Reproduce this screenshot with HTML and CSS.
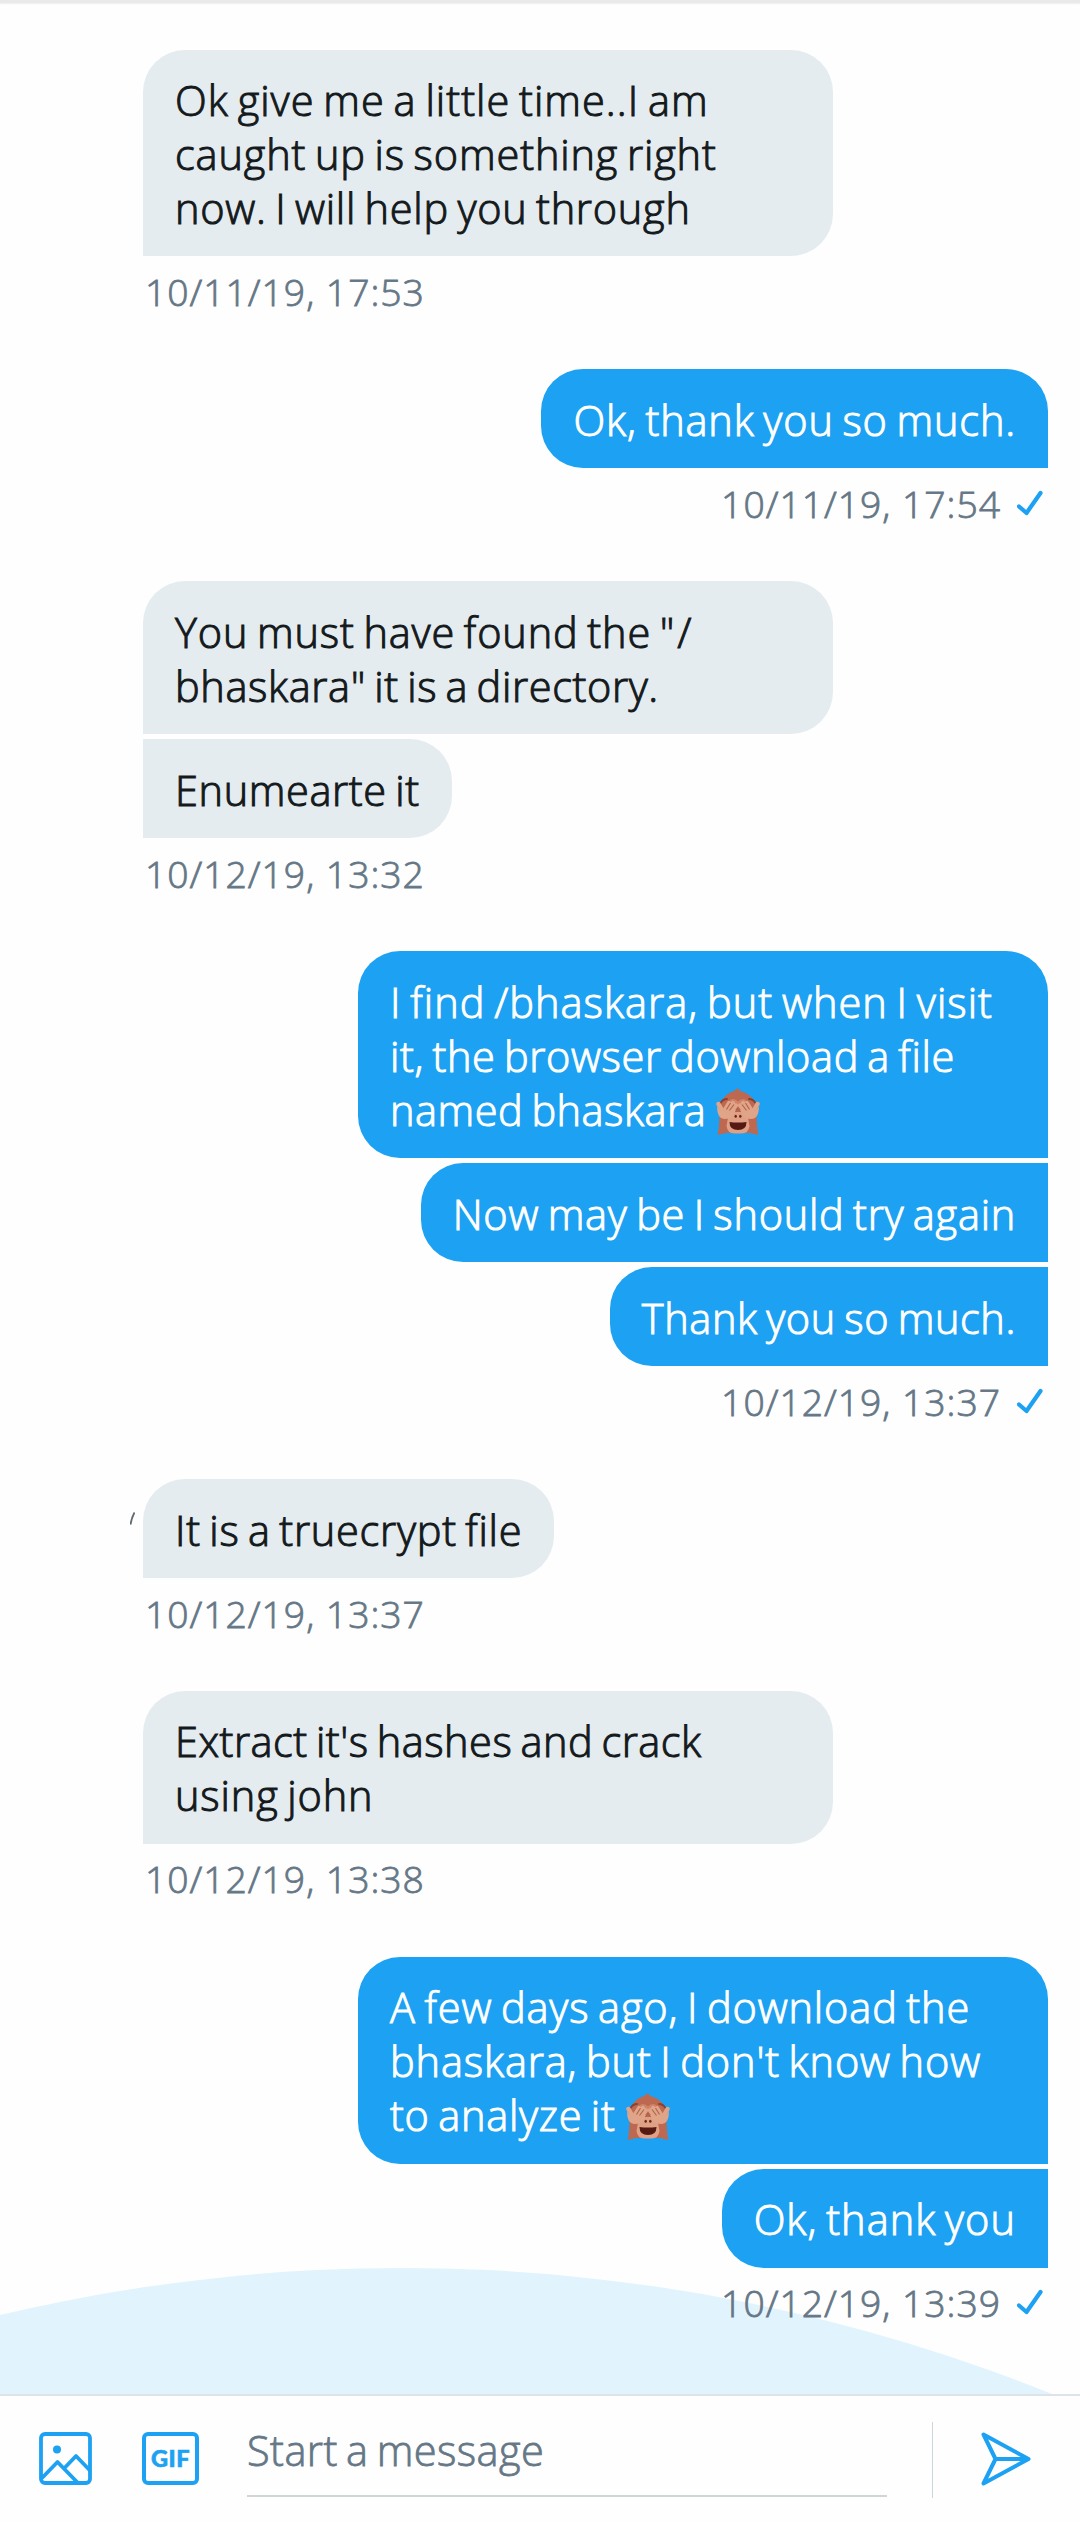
FILE: index.html
```
<!DOCTYPE html>
<html lang="en">
<head>
<meta charset="utf-8">
<title>Direct message</title>
<link rel="stylesheet" href="styles.css">
</head>
<body>
<svg class="defs" aria-hidden="true">
  <symbol id="check" viewBox="0 0 26 26">
    <path d="M2 16.500 9.500 23 23.500 3" fill="none" stroke="currentColor" stroke-width="4.200" stroke-linecap="round" stroke-linejoin="round"/>
  </symbol>
  <symbol id="monkey" viewBox="0 0 44 47">
    <path d="M1.500 47C3.500 40 3 31 4 22 4 11 11 5 18 3L22 0 24 3C33 5 40 11 40 22 41 31 40.500 40 42.500 47L34 45 10 45Z" fill="#bd6850"/>
    <path d="M13 24h18l2.500 14q-1 7.500-8 7.500h-7q-7 0-8-7.500Z" fill="#dfa086"/>
    <path d="M13 18q-1-7 4-7 3 0 5 2.500 2-2.500 5-2.500 5 0 4 7Z" fill="#cf8468"/>
    <g fill="none" stroke-linecap="round">
      <path d="M4.500 15Q7 11 11 11M39.500 15Q37 11 33 11" stroke="#8f3f2c" stroke-width="1.800"/>
      <path d="M2.500 16 7 24M41.500 16 37 24" stroke="#e0a489" stroke-width="4.500"/>
      <path d="M8 23 13 15M36 23 31 15M11 25 17 15M33 25 27 15M13 26.500 20 17.500M31 26.500 24 17.500" stroke="#e0a489" stroke-width="4.200"/>
    </g>
    <path d="M1 18q2 5 6 4l8-1 5 1q-2 9-11 9Q1 31 1 18ZM43 18q-2 5-6 4l-8-1-5 1q2 9 11 9 8 0 8-13Z" fill="#e0a489"/>
    <path d="M10.500 21.500 14.500 15M13.500 22.500 18 16.500M33.500 21.500 29.500 15M30.500 22.500 26 16.500M19.500 24 22 20.500 24.500 24" fill="none" stroke="#b06248" stroke-width="1.100"/>
    <ellipse cx="19.700" cy="28.300" rx="1.200" ry="1.500" fill="#6b2418"/>
    <ellipse cx="24.300" cy="28.300" rx="1.200" ry="1.500" fill="#6b2418"/>
    <path d="M13.500 34q8.500 1 17 0 0 8-8.500 8t-8.500-8Z" fill="#551a12"/>
  </symbol>
</svg>

<div class="screen">
  <svg class="hill" viewBox="0 0 1080 128" aria-hidden="true"><circle cx="402" cy="1742" r="1740"/></svg>

  <main class="thread">
    <section class="group in">
      <div class="bubble wide"><span class="s4">Ok give me a little time..I am</span><span class="s3">caught up is something right</span><span class="s2">now. I will help you through</span></div>
      <div class="meta"><time>10/11/19, 17:53</time></div>
    </section>

    <section class="group out">
      <div class="bubble"><span class="s3">Ok, thank you so much.</span></div>
      <div class="meta"><time>10/11/19, 17:54</time><svg class="check"><use href="#check"/></svg></div>
    </section>

    <section class="group in">
      <div class="bubble wide"><span class="s3">You must have found the "<i class="gap"></i>/</span><span class="s1">bhaskara" it is a directory.</span></div>
      <div class="bubble"><span class="s1">Enumearte it</span></div>
      <div class="meta"><time>10/12/19, 13:32</time></div>
    </section>

    <section class="group out">
      <div class="bubble wide"><span class="s4">I find /bhaskara, but when I visit</span><span class="s1">it, the browser download a file</span><span class="s0">named bhaskara <svg class="emoji"><use href="#monkey"/></svg></span></div>
      <div class="bubble"><span class="s2">Now may be I should try again</span></div>
      <div class="bubble"><span class="s1">Thank you so much.</span></div>
      <div class="meta"><time>10/12/19, 13:37</time><svg class="check"><use href="#check"/></svg></div>
    </section>

    <section class="group in">
      <svg class="tick" viewBox="0 0 5 13"><path d="M.5 12.500Q1.500 6 4.500.5" fill="none" stroke="#5f6b71" stroke-width="1.800"/></svg>
      <div class="bubble"><span class="s2">It is a truecrypt file</span></div>
      <div class="meta"><time>10/12/19, 13:37</time></div>
    </section>

    <section class="group in">
      <div class="bubble wide"><span class="s0">Extract it's hashes and crack</span><span class="s3">using john</span></div>
      <div class="meta"><time>10/12/19, 13:38</time></div>
    </section>

    <section class="group out">
      <div class="bubble wide"><span class="s3">A few days ago, I download the</span><span class="s3">bhaskara, but I don't know how</span><span class="s2">to analyze it <svg class="emoji"><use href="#monkey"/></svg></span></div>
      <div class="bubble"><span class="s4">Ok, thank you</span></div>
      <div class="meta"><time>10/12/19, 13:39</time><svg class="check"><use href="#check"/></svg></div>
    </section>
  </main>

  <footer class="composer">
    <svg class="photo" viewBox="0 0 53 53" fill="none" stroke="currentColor" stroke-width="3.800" stroke-linejoin="round">
      <rect x="2" y="2" width="49" height="49" rx="4"/>
      <path d="M3 46 18.500 30 39 51M25 36.500 37 24 51 38.500"/>
      <circle cx="18" cy="17.500" r="4" fill="currentColor" stroke="none"/>
    </svg>
    <div class="gif">GIF</div>
    <div class="field">Start a message</div>
    <div class="send">
      <svg viewBox="0 0 50 54" fill="none" stroke="currentColor" stroke-width="4" stroke-linejoin="round" stroke-linecap="round">
        <path d="M2.500 2.500 47.500 27 2.500 51.500 14.500 27ZM14.500 27H46"/>
      </svg>
    </div>
  </footer>
</div>
</body>
</html>
```
FILE: styles.css
```
* { box-sizing: border-box; }

body {
  margin: 0;
  background: #fefefe;
  color: #14191c;
  font-family: "Open Sans", "Noto Sans", sans-serif;
  font-weight: 300;
  -webkit-text-stroke: 1px currentColor;
}

.defs { position: absolute; width: 0; height: 0; }

.screen {
  position: relative;
  display: flex;
  flex-direction: column;
  height: 2522px;
  overflow: hidden;
  border-top: 3px solid #e9e9e9;
}

/* pale wave behind the end of the thread */
.hill {
  position: absolute;
  left: 0;
  bottom: 128px;
  width: 1080px;
  height: 128px;
  fill: #e1f3fd;
}

.thread {
  position: relative;
  flex: 1;
  min-height: 0;
  padding: 46.500px 32px 0 143px;
  display: flex;
  flex-direction: column;
  gap: 53.200px;
  box-shadow: inset 0 2px 2px -1px #eeeeee;
}

.group {
  position: relative;
  display: flex;
  flex-direction: column;
  align-items: flex-start;
  gap: 5.100px;
}
.group.out { align-items: flex-end; }

.bubble {
  padding: 23.600px 32px 21.200px;
  border-radius: 42px 42px 42px 0;
  background: #e5ecef;
  font-size: 41.500px;
  line-height: 54px;
  word-spacing: -3px;
  white-space: nowrap;
}
.bubble span { display: block; height: 54px; }
.wide { width: 690px; }
.in .bubble + .bubble { border-top-left-radius: 0; }
.out .bubble {
  border-radius: 42px 42px 0 42px;
  background: #1da1f2;
  color: #fff;
}
.out .bubble + .bubble { border-top-right-radius: 0; }

.s0 { letter-spacing: 0.500px; }
.s1 { letter-spacing: 0.620px; }
.s2 { letter-spacing: 0.740px; }
.s3 { letter-spacing: 0.860px; }
.s4 { letter-spacing: 1.020px; }
.gap { display: inline-block; width: 2px; }

.emoji {
  width: 44px;
  height: 47px;
  margin-left: 2px;
  vertical-align: -9px;
}

.meta {
  display: flex;
  align-items: center;
  height: 50px;
  margin-top: 5.700px;
  margin-bottom: -0.800px;
  padding: 0 5px 0 2px;
  color: #657786;
  font-size: 37.300px;
  line-height: 50px;
  letter-spacing: 1px;
  white-space: nowrap;
  -webkit-text-stroke-width: 0.800px;
}
.check {
  width: 26px;
  height: 26px;
  margin: 0 0 2px 16px;
  color: #1da1f2;
}
.tick {
  position: absolute;
  left: -13px;
  top: 33px;
  width: 5px;
  height: 13px;
}

.composer {
  position: relative;
  display: flex;
  height: 128px;
  padding: 26px 0 0 39px;
  border-top: 2px solid #dde4e8;
  background: #fefefe;
  color: #1da1f2;
}
.photo { width: 53px; height: 53px; margin: 10px 50px 0 0; }
.gif {
  width: 57px;
  height: 53px;
  margin: 10px 48px 0 0;
  border: 4px solid #1da1f2;
  border-radius: 6px;
  font: 900 23.500px/45px Lato, "Open Sans", sans-serif;
  letter-spacing: 0.500px;
  text-align: center;
  -webkit-text-stroke-width: 0.600px;
}
.field {
  width: 640px;
  height: 75px;
  border-bottom: 2px solid #d0d5d7;
  color: #657786;
  font-size: 41.500px;
  line-height: 56px;
  letter-spacing: 0.450px;
  word-spacing: -3px;
  -webkit-text-stroke-width: 0.800px;
}
.send {
  height: 76px;
  margin-left: 45px;
  padding: 10px 0 0 48px;
  border-left: 1px solid #ccd6dd;
}
.send svg { display: block; width: 50px; height: 54px; }
```
